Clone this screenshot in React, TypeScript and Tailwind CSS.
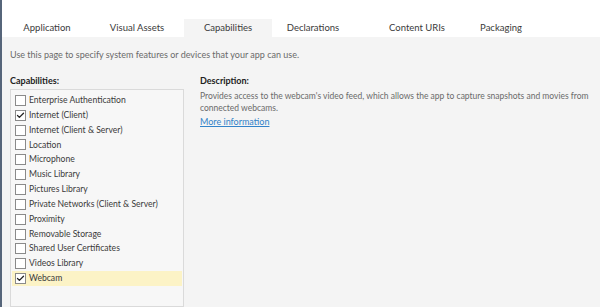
import {Check} from "lucide-react";

const tabs = [
    {label: "Application", w: "w-[90px]"},
    {label: "Visual Assets", w: "w-[90px]"},
    {label: "Capabilities", w: "w-[88px]", active: true},
    {label: "Declarations", w: "w-[82px]"},
    {label: "Content URIs", w: "w-[126px]"},
    {label: "Packaging", w: "w-[42px]"},
];

const capabilities = [
    {name: "Enterprise Authentication"},
    {name: "Internet (Client)", checked: true},
    {name: "Internet (Client & Server)"},
    {name: "Location"},
    {name: "Microphone"},
    {name: "Music Library"},
    {name: "Pictures Library"},
    {name: "Private Networks (Client & Server)"},
    {name: "Proximity"},
    {name: "Removable Storage"},
    {name: "Shared User Certificates"},
    {name: "Videos Library"},
    {name: "Webcam", checked: true, selected: true},
];

const CheckBox = ({checked}: { checked?: boolean }) => {
    return <span className="flex h-[11px] w-[11px] shrink-0 items-center justify-center border border-[#8a8a8a] bg-white">
        {checked && <Check className="h-[9px] w-[9px] text-[#222]" strokeWidth={3.5}/>}
    </span>
}

export default function App() {
    return <div
        className="flex h-[307px] w-[600px] flex-col overflow-hidden border-l-2 border-[#56657a] bg-[#f4f4f4] text-[#3a3a3a] font-['Lato',sans-serif]">
        <div className="flex h-[37px] items-end bg-white">
            {tabs.map(t => (
                <div key={t.label}
                     className={"flex h-[18px] items-center justify-center text-[9.5px] " + t.w + (t.active ? " ml-[2px] bg-[#f4f4f4]" : "")}>
                    {t.label}
                </div>
            ))}
        </div>

        <div className="flex flex-1 flex-col pl-[8px] pr-[4px] pt-[11px]">
            <p className="text-[9px] text-[#6a6a6a]">Use this page to specify system features or devices that your app can use.</p>

            <div className="mt-[12px] flex flex-1 gap-[16px]">
                <div className="flex w-[174px] flex-col">
                    <h3 className="text-[9px] font-bold text-[#222]">Capabilities:</h3>
                    <div className="mt-[2px] flex-1 border border-[#dadada] bg-[#f7f7f7] px-[1px] pt-[3px]">
                        {capabilities.map(c => (
                            <div key={c.name}
                                 className={"flex h-[14.85px] items-center gap-[3px] pl-[3px] text-[8.6px] " + (c.selected ? "bg-[#fcf3c6]" : "")}>
                                <CheckBox checked={c.checked}/>
                                <span>{c.name}</span>
                            </div>
                        ))}
                    </div>
                </div>

                <div className="flex flex-1 flex-col">
                    <h3 className="text-[9px] font-bold text-[#222]">Description:</h3>
                    <p className="mt-[3px] text-[8.5px] leading-[12px] text-[#6a6a6a]">
                        Provides access to the webcam's video feed, which allows the app to capture snapshots and movies from connected webcams.
                    </p>
                    <a className="mt-[1px] text-[9px] text-[#3383c9] underline">More information</a>
                </div>
            </div>
        </div>
    </div>
}
